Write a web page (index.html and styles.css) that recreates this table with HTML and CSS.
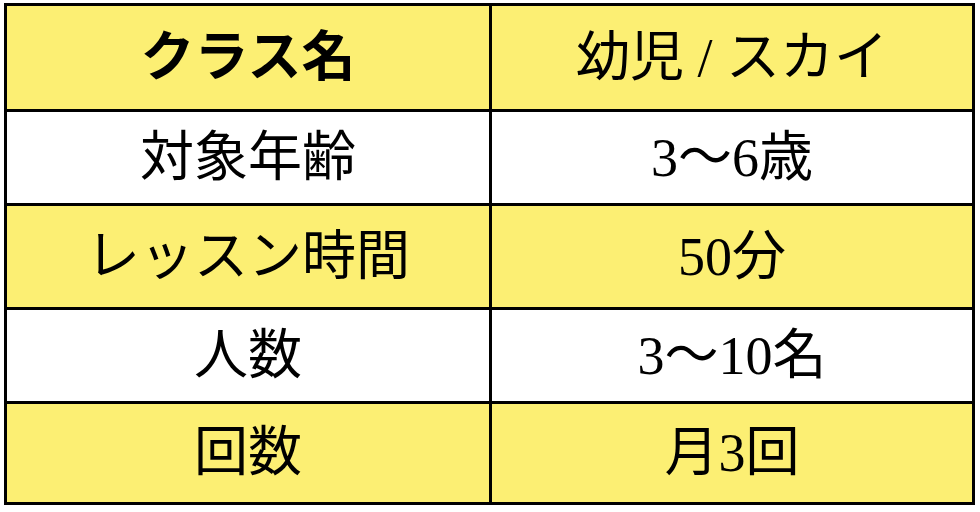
FILE: index.html
```html
<!DOCTYPE html>
<html lang="ja">
<head>
<meta charset="utf-8">
<link rel="stylesheet" href="styles.css">
</head>
<body>
<div class="table">
  <div class="cell yellow head">クラス名</div>
  <div class="cell yellow">幼児 / スカイ</div>
  <div class="cell white">対象年齢</div>
  <div class="cell white">3〜6歳</div>
  <div class="cell yellow">レッスン時間</div>
  <div class="cell yellow">50分</div>
  <div class="cell white">人数</div>
  <div class="cell white">3〜10名</div>
  <div class="cell yellow">回数</div>
  <div class="cell yellow">月3回</div>
</div>
</body>
</html>
```

FILE: styles.css
```css
html, body {
  margin: 0;
  padding: 0;
  background: #ffffff;
}
body {
  padding: 3px 0 0 4px;
}
.table {
  display: grid;
  grid-template-columns: 482px 480px;
  grid-template-rows: 103px 91px 101px 91px 98px;
  gap: 3px;
  padding: 3px;
  width: 971px;
  box-sizing: border-box;
  background: #000000;
}
.cell {
  display: flex;
  align-items: center;
  justify-content: center;
  font-family: "Liberation Serif", "Noto Sans CJK JP", serif;
  font-size: 54px;
  color: #000000;
  line-height: 1;
}
.yellow {
  background: #fcef73;
}
.white {
  background: #ffffff;
}
.head {
  font-weight: 700;
}
```
